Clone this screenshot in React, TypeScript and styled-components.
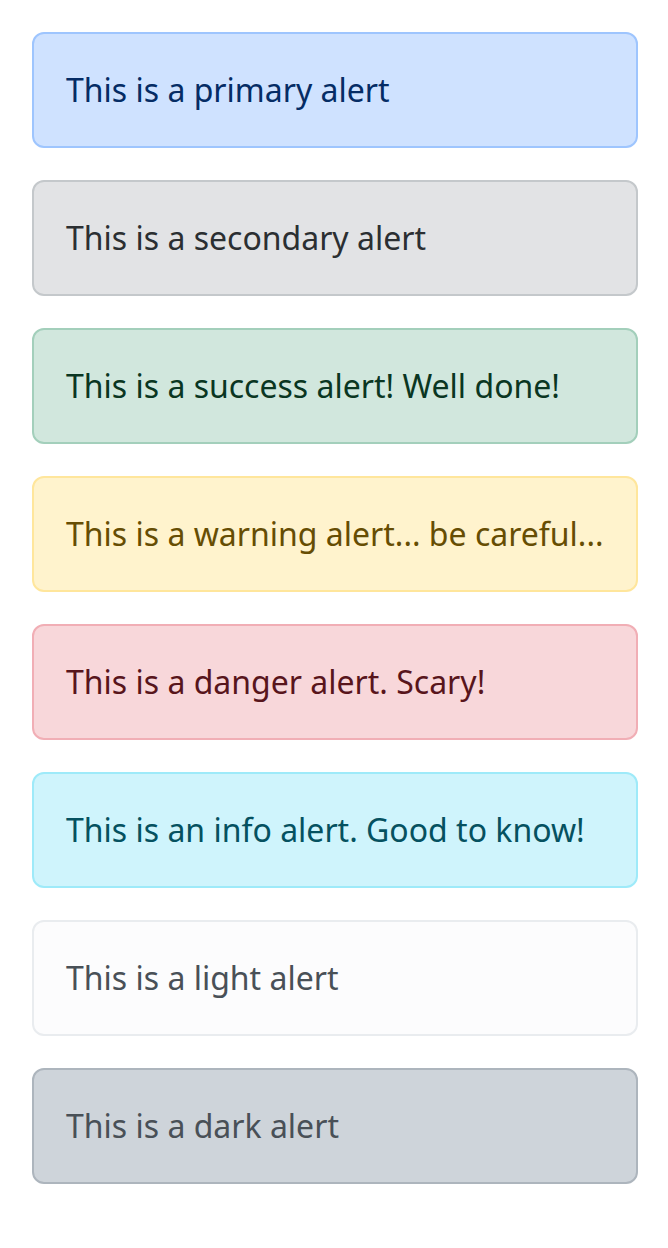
import React from "react";
import styled, { createGlobalStyle } from "styled-components";

const Global = createGlobalStyle`
  html, body { margin: 0; padding: 0; background: #fff; }
  body { font-family: "Noto Sans", "Open Sans", sans-serif; }
`;

const Page = styled.div`
  padding: 32px 30px 32px 32px;
  display: flex;
  flex-direction: column;
  gap: 32px;
`;

type Variant = { bg: string; border: string; fg: string };

const Alert = styled.div<{ $v: Variant }>`
  padding: 32px 30px 32px 32px;
  border: 2px solid ${(p) => p.$v.border};
  border-radius: 12px;
  background: ${(p) => p.$v.bg};
  color: ${(p) => p.$v.fg};
  font-size: 32px;
  line-height: 48px;
  font-weight: 400;
`;

const alerts: { text: string; v: Variant }[] = [
  { text: "This is a primary alert", v: { bg: "#cfe2ff", border: "#9ec5fe", fg: "#052c65" } },
  { text: "This is a secondary alert", v: { bg: "#e2e3e5", border: "#c4c8cb", fg: "#2b2f32" } },
  { text: "This is a success alert! Well done!", v: { bg: "#d1e7dd", border: "#a3cfbb", fg: "#0a3622" } },
  { text: "This is a warning alert... be careful...", v: { bg: "#fff3cd", border: "#ffe69c", fg: "#664d03" } },
  { text: "This is a danger alert. Scary!", v: { bg: "#f8d7da", border: "#f1aeb5", fg: "#58151c" } },
  { text: "This is an info alert. Good to know!", v: { bg: "#cff4fc", border: "#9eeaf9", fg: "#055160" } },
  { text: "This is a light alert", v: { bg: "#fcfcfd", border: "#e9ecef", fg: "#495057" } },
  { text: "This is a dark alert", v: { bg: "#ced4da", border: "#adb5bd", fg: "#495057" } },
];

export default function App() {
  return (
    <>
      <Global />
      <Page>
        {alerts.map((a) => (
          <Alert key={a.text} $v={a.v} role="alert">
            {a.text}
          </Alert>
        ))}
      </Page>
    </>
  );
}
